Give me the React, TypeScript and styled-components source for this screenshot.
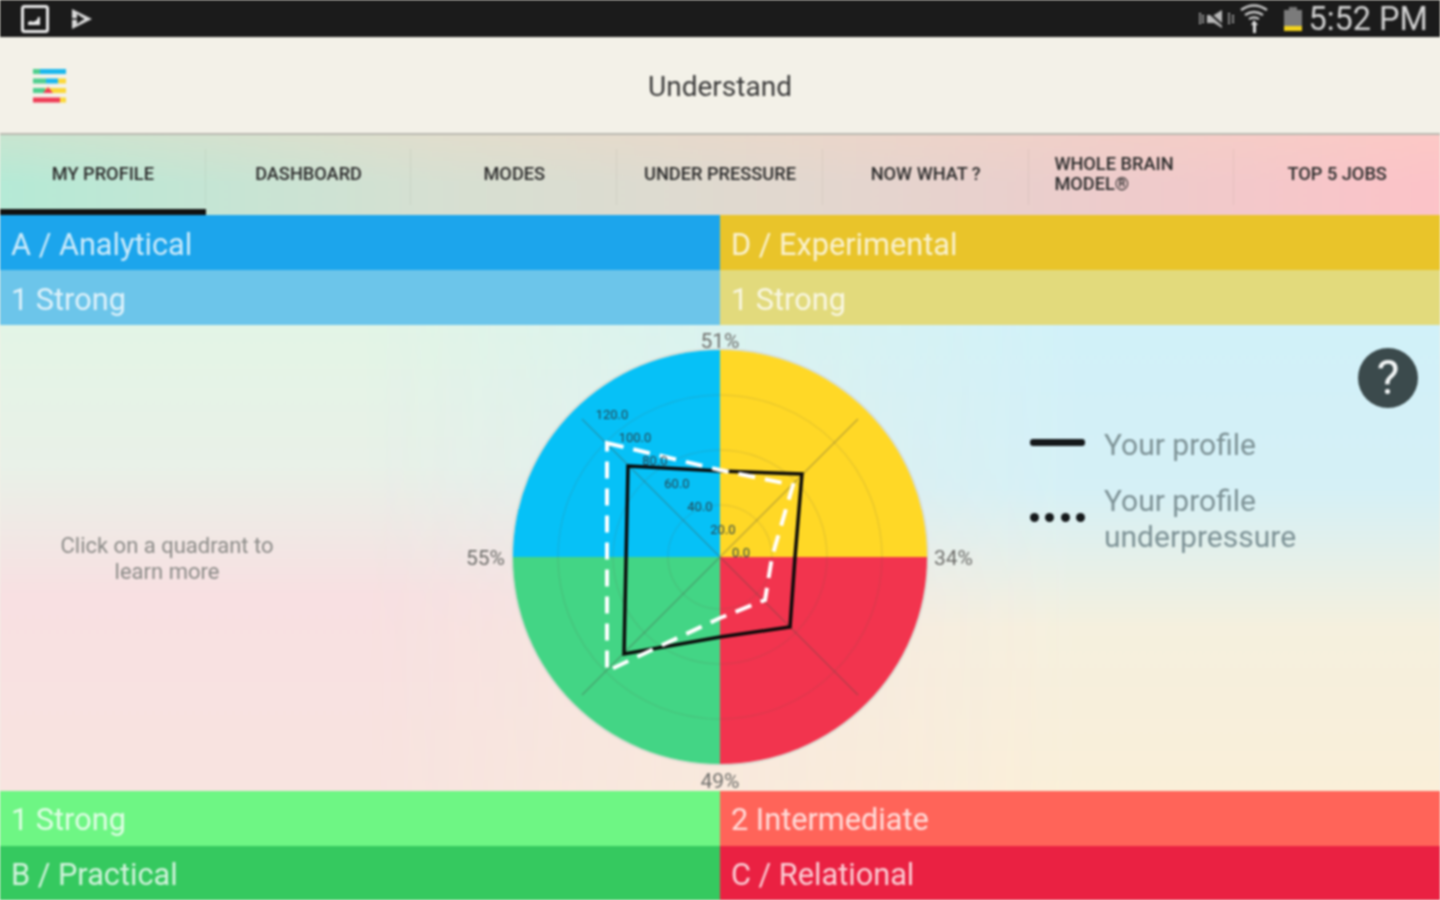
import styled, { createGlobalStyle } from 'styled-components'

const GlobalStyle = createGlobalStyle`
  html, body {
    margin: 0;
    padding: 0;
    background: #f3f1e8;
    font-family: Roboto, "Liberation Sans", sans-serif;
  }
`;

const Screen = styled.div`
  display: flex;
  flex-direction: column;
  width: 1440px;
  height: 900px;
  overflow: hidden;
  filter: blur(0.8px);

  & > * {
    flex-shrink: 0;
  }
`;

const StatusBar = styled.div`
  display: flex;
  align-items: center;
  height: 37px;
  padding: 0 12px 0 20px;
  background: #1b1b1b;
  color: #d2d2d2;
`;

const StatusLeft = styled.div`
  display: flex;
  align-items: center;
  gap: 20px;
  flex: 1;
`;

const StatusRight = styled.div`
  display: flex;
  align-items: center;
`;

const WifiIcon = styled.svg`
  margin-left: 4px;
`;

const BatteryIcon = styled.svg`
  margin-left: 13px;
`;

const Clock = styled.span`
  margin: 2px 0 0 4px;
  font-size: 32.5px;
  line-height: 35px;
`;

const Header = styled.header`
  position: relative;
  display: flex;
  align-items: center;
  justify-content: center;
  height: 96px;
  background: #f3f1e8;
  border-bottom: 2px solid #b9b8b0;
`;

const Menu = styled.svg`
  position: absolute;
  left: 33px;
  top: 32px;
`;

const Title = styled.h1`
  margin: 2px 0 0;
  font-size: 28px;
  font-weight: 400;
  color: #3b3b3b;
`;

const Tabs = styled.nav`
  display: grid;
  grid-template-columns: repeat(7, 1fr);
  height: 80px;
  background:
    linear-gradient(180deg, rgba(255, 215, 190, 0.25) 0%, rgba(255, 215, 190, 0) 60%),
    linear-gradient(90deg, #b5ead6 0%, #d6e0d2 30%, #e2d8cf 55%, #eccdcc 75%, #fcc3c8 100%);
`;

const Tab = styled.div<{ $active?: boolean }>`
  position: relative;
  display: flex;
  align-items: center;
  justify-content: center;
  padding-top: 4px;
  font-size: 18.2px;
  line-height: 20px;
  font-weight: 500;
  color: #2c2c2c;
  box-sizing: border-box;
  border-bottom: 6px solid ${(p) => (p.$active ? '#111' : 'transparent')};
  background-clip: padding-box;

  &:not(:last-child)::after {
    content: '';
    position: absolute;
    top: 14px;
    bottom: 4px;
    right: 0;
    width: 1px;
    background: rgba(120, 120, 110, 0.12);
  }
`;

const WrappedLabel = styled.span`
  width: 120px;
  margin-right: 34px;
`;

const QuadrantBar = styled.div`
  display: grid;
  grid-template-columns: 1fr 1fr;
`;

const BarCell = styled.div<{ $bg: string; $top?: boolean }>`
  display: flex;
  align-items: center;
  box-sizing: border-box;
  height: 55px;
  padding: ${(p) => (p.$top ? '3px' : '1px')} 0 0 11px;
  background: ${(p) => p.$bg};
  color: rgba(255, 255, 255, 0.78);
  font-size: 30.7px;
`;

const Main = styled.main`
  position: relative;
  display: grid;
  grid-template-columns: 460px 520px 1fr;
  height: 466px;
  background: linear-gradient(180deg, #e3f5e6 0%, #e9f1e8 30%, #f8e0e2 58%, #f8e4e0 100%);
`;

const RightTint = styled.div`
  position: absolute;
  inset: 0;
  background: linear-gradient(180deg, #d1f1f9 0%, #d5f0f6 35%, #f5f0de 65%, #faefd9 100%);
  mask-image: linear-gradient(90deg, transparent 0%, transparent 25%, #000 75%, #000 100%);
`;

const Note = styled.p`
  position: relative;
  align-self: start;
  margin: 208px 126px 0 0;
  text-align: center;
  font-size: 22px;
  line-height: 26px;
  color: #8b8b88;
`;

const Chart = styled.svg`
  position: relative;
  display: block;
  overflow: visible;
`;

const Legend = styled.div`
  position: relative;
  display: flex;
  flex-direction: column;
  gap: 20px;
  padding: 102px 0 0 50px;
`;

const LegendRow = styled.div`
  display: flex;
  align-items: center;
  gap: 19px;
`;

const LegendLabel = styled.span`
  font-size: 30px;
  line-height: 36px;
  color: #7d9296;
`;

const Solid = styled.span`
  width: 55px;
  height: 7px;
  margin-top: -6px;
  border-radius: 3px;
  background: #14181a;
`;

const Dots = styled.span`
  display: flex;
  justify-content: space-between;
  width: 55px;
  margin-top: -4px;
`;

const Dot = styled.span`
  width: 9px;
  height: 9px;
  border-radius: 50%;
  background: #14181a;
`;

const Help = styled.div`
  position: absolute;
  top: 23px;
  right: 22px;
  display: flex;
  align-items: center;
  justify-content: center;
  width: 60px;
  height: 60px;
  border-radius: 50%;
  background: #3b4a4c;
  color: #f2f5f5;
  font-size: 48px;
  line-height: 60px;
`;

const tabs = ['MY PROFILE', 'DASHBOARD', 'MODES', 'UNDER PRESSURE', 'NOW WHAT ?', 'WHOLE BRAIN MODEL®', 'TOP 5 JOBS'];
const ticks = [
  ['120.0', 152, 94], ['100.0', 175, 117], ['80.0', 195, 140], ['60.0', 217, 163],
  ['40.0', 240, 186], ['20.0', 263, 209], ['0.0', 281, 232],
] as const;

// chart coords: centre of the dial sits at 260,232
const cx = 260;
const cy = 232;
const R = 207;

export default function App() {
  return (
    <Screen>
      <GlobalStyle />
      <StatusBar>
        <StatusLeft>
          <svg width="30" height="30" viewBox="0 0 30 30">
            <rect x="2.5" y="2.5" width="25" height="25" rx="2" fill="none" stroke="#e8e8e8" strokeWidth="3" />
            <path d="M8 21v-3l3-1 2 1 4-2 1-3 2 0 0 8z" fill="#e8e8e8" />
          </svg>
          <svg width="24" height="24" viewBox="0 0 24 24">
            <path d="M2 2l20 10L2 22z" fill="#d8d8d8" />
            <path d="M7 7l7 5-7 5z" fill="#1b1b1b" />
            <path d="M2 12h12" stroke="#1b1b1b" strokeWidth="1.5" />
          </svg>
        </StatusLeft>
        <StatusRight>
          <svg width="38" height="24" viewBox="0 0 38 24">
            <path d="M10 8h7l8-5v18l-8-5h-7z" fill="#b8b8b8" />
            <path d="M9 3l20 18" stroke="#1b1b1b" strokeWidth="2" />
            <path d="M3 6v12M6 8v8M32 6v12M36 8v8" stroke="#b0b0b0" strokeWidth="2" strokeDasharray="2 1" />
          </svg>
          <WifiIcon width="30" height="32" viewBox="0 0 30 32">
            <path d="M2 7q13-9 26 0M6 12q9-6 18 0M10 16q5-3 10 0" fill="none" stroke="#c8c8c8" strokeWidth="2.5" />
            <path d="M15 17l-3 5h2v8h3v-8h2z" fill="#dedede" />
          </WifiIcon>
          <BatteryIcon width="22" height="26" viewBox="0 0 22 26">
            <rect x="7" y="1" width="8" height="3" fill="#777" />
            <rect x="2" y="4" width="18" height="21" fill="#7b7b7b" />
            <rect x="2" y="20" width="18" height="5" fill="#f2d21c" />
          </BatteryIcon>
          <Clock>5:52 PM</Clock>
        </StatusRight>
      </StatusBar>

      <Header>
        <Menu width="34" height="34" viewBox="0 0 34 34">
          <path d="M0 2.5h7" stroke="#4fcf8f" strokeWidth="5" />
          <path d="M7 2.5h26" stroke="#1bb8ee" strokeWidth="5" />
          <path d="M0 12h13" stroke="#4fcf8f" strokeWidth="5" />
          <path d="M13 12h12" stroke="#1bb8ee" strokeWidth="5" />
          <path d="M25 12h8" stroke="#fbd83a" strokeWidth="5" />
          <path d="M0 21.5h33" stroke="#fbd83a" strokeWidth="5" />
          <path d="M0 21.5h12" stroke="#4fcf8f" strokeWidth="5" />
          <path d="M10 24l5-6 5 6z" fill="#ef3c56" />
          <path d="M0 31h27" stroke="#ef3c56" strokeWidth="5" />
          <path d="M27 31h6" stroke="#fbd83a" strokeWidth="5" />
        </Menu>
        <Title>Understand</Title>
      </Header>

      <Tabs>
        {tabs.map((t, i) => (
          <Tab key={t} $active={i === 0}>
            {i === 5 ? <WrappedLabel>{t}</WrappedLabel> : <span>{t}</span>}
          </Tab>
        ))}
      </Tabs>

      <QuadrantBar>
        <BarCell $top $bg="#1ca5ec">A / Analytical</BarCell>
        <BarCell $top $bg="#e9c42a">D / Experimental</BarCell>
        <BarCell $top $bg="#6cc5ea">1 Strong</BarCell>
        <BarCell $top $bg="#e2da7c">1 Strong</BarCell>
      </QuadrantBar>

      <Main>
        <RightTint />
        <Note>
          Click on a quadrant to
          <br />
          learn more
        </Note>
        <Chart width="520" height="466" viewBox="0 0 520 466">
          <circle cx={cx} cy={cy} r={R + 1} fill="none" stroke="#d5d8d0" strokeWidth="1.5" />
          <path d={`M${cx} ${cy}V${cy - R}A${R} ${R} 0 0 0 ${cx - R} ${cy}Z`} fill="#06c1f7" />
          <path d={`M${cx} ${cy}V${cy - R}A${R} ${R} 0 0 1 ${cx + R} ${cy}Z`} fill="#ffd826" />
          <path d={`M${cx} ${cy}V${cy + R}A${R} ${R} 0 0 1 ${cx - R} ${cy}Z`} fill="#43d585" />
          <path d={`M${cx} ${cy}V${cy + R}A${R} ${R} 0 0 0 ${cx + R} ${cy}Z`} fill="#f2344e" />
          <g fill="none" stroke="rgba(90,90,80,0.13)" strokeWidth="1.5">
            <circle cx={cx} cy={cy} r="52" />
            <circle cx={cx} cy={cy} r="107" />
            <circle cx={cx} cy={cy} r="162" />
          </g>
          <path
            d={`M${cx - 138} ${cy - 138}L${cx + 138} ${cy + 138}M${cx + 138} ${cy - 138}L${cx - 138} ${cy + 138}`}
            stroke="rgba(80,80,70,0.34)"
            strokeWidth="1.5"
          />
          <path d="M168 141L260 146L342 149L335 232L330 302L260 312L164 329Z" fill="none" stroke="#0a0a0a" strokeWidth="3.5" />
          <path
            d="M147 118L260 145L333 160L312 232L305 275L260 293L147 346Z"
            fill="none"
            stroke="#fff"
            strokeWidth="4"
            strokeDasharray="17 10"
          />
          <g fontSize="13" fill="#27424e" textAnchor="middle">
            {ticks.map(([label, x, y]) => (
              <text key={label} x={x} y={y}>
                {label}
              </text>
            ))}
          </g>
          <g fontSize="21" fill="#6f6f6c">
            <text x={cx} y="23" textAnchor="middle">51%</text>
            <text x={cx} y="463" textAnchor="middle">49%</text>
            <text x="6" y="240">55%</text>
            <text x="474" y="240">34%</text>
          </g>
        </Chart>
        <Legend>
          <LegendRow>
            <Solid />
            <LegendLabel>Your profile</LegendLabel>
          </LegendRow>
          <LegendRow>
            <Dots>
              <Dot />
              <Dot />
              <Dot />
              <Dot />
            </Dots>
            <LegendLabel>
              Your profile
              <br />
              underpressure
            </LegendLabel>
          </LegendRow>
        </Legend>
        <Help>?</Help>
      </Main>

      <QuadrantBar>
        <BarCell $bg="#6ef684">1 Strong</BarCell>
        <BarCell $bg="#ff6459">2 Intermediate</BarCell>
        <BarCell $bg="#35c95f">B / Practical</BarCell>
        <BarCell $bg="#ea2142">C / Relational</BarCell>
      </QuadrantBar>
    </Screen>
  )
}
